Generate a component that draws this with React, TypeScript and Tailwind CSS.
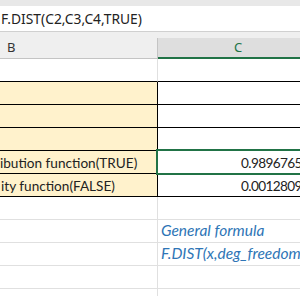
import React from 'react';

type Row = {
  b?: string;
  c?: string;
  beige?: boolean;
  dark?: boolean;
  blue?: boolean;
  selected?: boolean;
};

const rows: Row[] = [
  { dark: true },
  { beige: true, dark: true },
  { beige: true, dark: true },
  { beige: true, dark: true },
  { b: 'ibution function(TRUE)', c: '0.98967653', beige: true, dark: true, selected: true },
  { b: 'ity function(FALSE)', c: '0.00128093', beige: true, dark: true },
  {},
  { c: 'General formula', blue: true },
  { c: 'F.DIST(x,deg_freedom1,deg_freedom2,cumulative)', blue: true },
  {},
  {},
];

export default function App() {
  return (
    <div className="w-[300px] h-[296px] overflow-hidden bg-white font-['Lato',sans-serif] text-[#222]">
      <div className="h-[6px] bg-[#e8e8e8]" />
      <div className="h-[25px] flex items-center pt-[2px] pl-[1px] text-[13.8px] text-[#222] font-['Noto_Sans',sans-serif] whitespace-nowrap">
        F.DIST(C2,C3,C4,TRUE)
      </div>
      <div className="h-[7px] bg-[#efefef] border-t border-[#d0d0d0]" />
      <div className="flex h-[21px] bg-[#efefef] font-['Noto_Sans',sans-serif] text-[13px]">
        <div className="w-[158px] shrink-0 border-b border-r border-[#c4c4c4] flex items-center pl-[7px] text-[#333]">B</div>
        <div className="flex-1 bg-[#dedede] border-b-2 border-[#217346] flex items-center justify-center text-[#217346]">
          <span className="ml-[18px]">C</span>
        </div>
      </div>
      {rows.map((r, i) => {
        const line = r.dark ? 'border-black' : 'border-[#e0e0e0]';
        const vline = r.dark && i > 0 ? 'border-r-black' : 'border-r-[#e0e0e0]';
        return (
          <div key={i} className="flex h-[23px] text-[13.6px] whitespace-nowrap">
            <div
              className={`w-[158px] shrink-0 border-b border-r overflow-hidden flex items-end ${line} ${vline} ${
                r.beige ? 'bg-[#fff2cc]' : 'bg-white'
              } ${i === 5 ? 'pl-[1px]' : ''}`}
            >
              {r.b}
            </div>
            <div className={`relative flex-1 border-b flex items-end ${line}`}>
              {r.selected && (
                <div className="absolute top-[-2px] bottom-[-2px] left-[-2px] right-[-20px] border-2 border-[#217346]" />
              )}
              {r.c && (
                <span
                  className={
                    r.blue ? 'pl-[3px] italic text-[15.5px] text-[#2e75b6]' : 'pl-[83px] tracking-[-0.6px]'
                  }
                >
                  {r.c}
                </span>
              )}
            </div>
          </div>
        );
      })}
    </div>
  );
}
